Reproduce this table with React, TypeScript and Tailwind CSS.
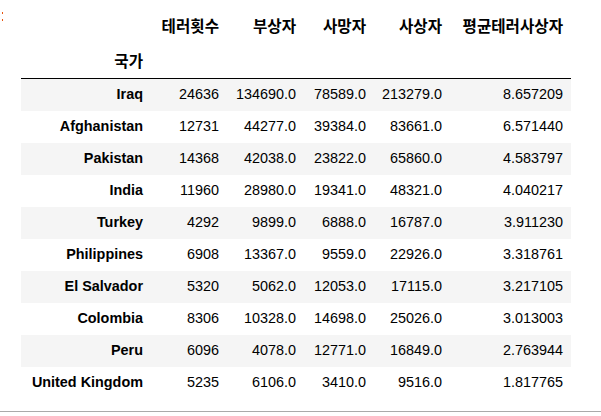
import React from "react";

const rows: [string, string, string, string, string, string][] = [
  ["Iraq", "24636", "134690.0", "78589.0", "213279.0", "8.657209"],
  ["Afghanistan", "12731", "44277.0", "39384.0", "83661.0", "6.571440"],
  ["Pakistan", "14368", "42038.0", "23822.0", "65860.0", "4.583797"],
  ["India", "11960", "28980.0", "19341.0", "48321.0", "4.040217"],
  ["Turkey", "4292", "9899.0", "6888.0", "16787.0", "3.911230"],
  ["Philippines", "6908", "13367.0", "9559.0", "22926.0", "3.318761"],
  ["El Salvador", "5320", "5062.0", "12053.0", "17115.0", "3.217105"],
  ["Colombia", "8306", "10328.0", "14698.0", "25026.0", "3.013003"],
  ["Peru", "6096", "4078.0", "12771.0", "16849.0", "2.763944"],
  ["United Kingdom", "5235", "6106.0", "3410.0", "9516.0", "1.817765"],
];

const headers = ["테러횟수", "부상자", "사망자", "사상자", "평균테러사상자"];

export default function App() {
  return (
    <div
      className="w-[601px] h-[416px] bg-white flex flex-col overflow-hidden text-black"
      style={{ fontFamily: '"Liberation Sans", "Noto Sans CJK KR", Arial, sans-serif' }}
    >
      <div className="flex flex-1 items-start">
        <div className="w-[21px] shrink-0 pt-[12px] pl-[2px] flex flex-col gap-[5px]">
          <span className="block w-[1px] h-[2px] bg-[#e8550f]" />
          <span className="block w-[1px] h-[2px] bg-[#e8550f]" />
        </div>
        <table className="mt-[8px] w-[550px] table-fixed border-separate border-spacing-0 text-[14.4px] leading-normal">
          <colgroup>
            <col className="w-[129px]" />
            <col className="w-[76px]" />
            <col className="w-[77px]" />
            <col className="w-[70px]" />
            <col className="w-[76px]" />
            <col className="w-[122px]" />
          </colgroup>
          <thead>
            <tr>
              <th className="h-[37px] p-0" />
              {headers.map((h, i) => (
                <th
                  key={h}
                  className={`h-[37px] py-0 pl-0 text-right align-middle font-bold whitespace-nowrap text-[15.6px] ${
                    i === 4 ? "pr-[8px]" : "pr-[7px]"
                  }`}
                >
                  {h}
                </th>
              ))}
            </tr>
            <tr>
              <th className="h-[34px] py-0 pl-0 pr-[7px] text-right align-middle font-bold text-[15.6px] border-b border-black">
                국가
              </th>
              {headers.map((h) => (
                <th key={h} className="h-[34px] p-0 border-b border-black" />
              ))}
            </tr>
          </thead>
          <tbody>
            {rows.map((r, idx) => (
              <tr key={r[0]} className={idx % 2 === 0 ? "bg-[#f5f5f5]" : "bg-white"}>
                <th className="h-[32px] py-0 pl-0 pr-[7px] text-right align-middle font-bold whitespace-nowrap">
                  {r[0]}
                </th>
                {r.slice(1).map((v, i) => (
                  <td
                    key={i}
                    className={`h-[32px] py-0 pl-0 text-right align-middle whitespace-nowrap ${
                      i === 4 ? "pr-[8px]" : "pr-[7px]"
                    }`}
                  >
                    {v}
                  </td>
                ))}
              </tr>
            ))}
          </tbody>
        </table>
      </div>
      <div className="h-px bg-[#aaaaaa] mb-[4px] shrink-0" />
    </div>
  );
}
